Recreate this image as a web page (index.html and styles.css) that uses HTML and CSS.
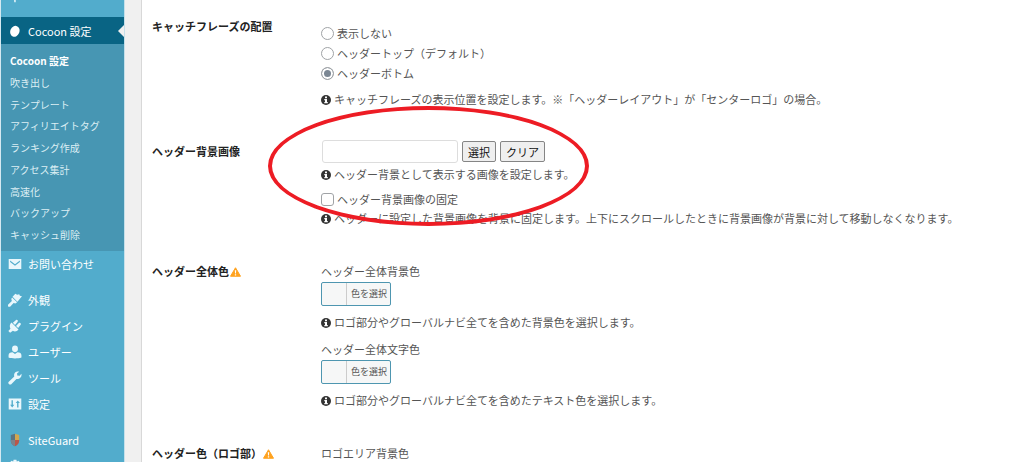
FILE: index.html
```html
<!DOCTYPE html>
<html lang="ja">

<head>
    <meta charset="UTF-8">
    <meta name="viewport" content="width=device-width, initial-scale=1.0">
    <title>Cocoon 設定</title>
    <link rel="stylesheet" href="styles.css">
</head>

<body>
    <svg class="symbols" aria-hidden="true">
        <symbol id="icon-info" viewBox="0 0 20 20">
            <circle cx="10" cy="10" r="10" fill="#333" />
            <path d="M8 3h4v3.400H8zM6.600 8H12v6h1.600v2.400H6.600V14H8v-3.600H6.600z" fill="#fff" />
        </symbol>
        <symbol id="icon-warning" viewBox="0 0 22 20">
            <path d="M11 1.500L21 18.500H1z" fill="#ffa21f" stroke="#ffa21f" stroke-width="2" stroke-linejoin="round" />
            <path d="M9.600 6.500h2.800l-.5 6.500h-1.800zM9.700 14.300h2.600v2.500H9.700z" fill="#fff" />
        </symbol>
    </svg>

    <div class="wrapper">
        <nav class="sidebar">
            <a href="#" class="menu-item menu-item-cut" aria-label="ツール">
                <svg class="menu-icon" viewBox="0 0 20 20"><path d="M8 5h3v14H9z" /></svg>
            </a>
            <a href="#" class="menu-item current">
                <svg class="menu-icon" viewBox="0 0 20 20"><ellipse cx="10" cy="10.500" rx="6.500" ry="8" transform="rotate(22 10 10)" /></svg>
                Cocoon 設定
            </a>
            <ul class="submenu">
                <li><a href="#" class="active">Cocoon 設定</a></li>
                <li><a href="#">吹き出し</a></li>
                <li><a href="#">テンプレート</a></li>
                <li><a href="#">アフィリエイトタグ</a></li>
                <li><a href="#">ランキング作成</a></li>
                <li><a href="#">アクセス集計</a></li>
                <li><a href="#">高速化</a></li>
                <li><a href="#">バックアップ</a></li>
                <li><a href="#">キャッシュ削除</a></li>
            </ul>
            <a href="#" class="menu-item">
                <svg class="menu-icon" viewBox="0 0 20 20"><path fill-rule="evenodd" d="M1 3h18v14H1zM3 5v2l7 5.500L17 7V5l-7 5.500z" /></svg>
                お問い合わせ
            </a>
            <div class="separator"></div>
            <a href="#" class="menu-item">
                <svg class="menu-icon" viewBox="0 0 20 20"><path d="M6.500 5.500L10.500 1l2.500 1.500 3-.7 1 2 3 .7-6.500 8zM5.800 6.300l7.200 7-2.500 1.700-2.500-.8L3 19.500c-2.200 1-4-.8-3-2.800L5.500 11.500l-.8-3z" /></svg>
                外観
            </a>
            <a href="#" class="menu-item">
                <svg class="menu-icon" viewBox="0 0 20 20"><path d="M5 5l10 10c-2 2.800-5.500 3.500-8 1.800L3 19.800.5 17.300l3-3.500C1.800 11 2.500 7 5 5zM7 5.500l4.500-4c1.500-1 3.300.8 2.300 2.300L10 8.500zM11.500 10l4-4.200c1.700-1.200 3.800.8 2.600 2.500L14.500 13z" /></svg>
                プラグイン
            </a>
            <a href="#" class="menu-item">
                <svg class="menu-icon" viewBox="0 0 20 20"><ellipse cx="10" cy="5.500" rx="4.200" ry="4.700" /><path d="M.8 18v-3c0-2.800 2.200-4.500 5.700-4.500l3.500 2.300 3.500-2.300c3.500 0 5.700 1.700 5.700 4.500v3c-5 1.700-13.400 1.700-18.400 0z" /></svg>
                ユーザー
            </a>
            <a href="#" class="menu-item">
                <svg class="menu-icon" viewBox="0 0 20 20"><path d="M16.700 6.800L13.200 6.600 13 3.300 16 1C13.500.2 11 .9 9.600 2.800 8.500 4.300 8.500 6.500 9 8L.8 15.600c-1.200 1.500 1 4.800 3.500 3.600L12 11.300c2 .7 4 .1 5.600-1.500 1.600-1.600 2.100-3.800 1.500-5.800z" /></svg>
                ツール
            </a>
            <a href="#" class="menu-item">
                <svg class="menu-icon" viewBox="0 0 20 20"><path fill-rule="evenodd" d="M1 2h18v16H1zM5 4.500V11H3l3 4 3-4H7V4.500zM14 5l-3 3.500h2V15h2V8.500h2z" /></svg>
                設定
            </a>
            <div class="separator"></div>
            <a href="#" class="menu-item">
                <svg class="menu-icon" viewBox="0 0 20 20">
                    <path d="M10 1L4 3v8c0 4 3 6.500 6 8z" fill="#5b7483" />
                    <path d="M10 1l6 2v7h-6z" fill="#d3a64f" />
                    <path d="M10 10h6v1c0 4-3 6.500-6 8z" fill="#b9574a" />
                    <path d="M4 10h6v9c-3-1.500-6-4-6-8z" fill="#7b828b" />
                </svg>
                SiteGuard
            </a>
            <a href="#" class="menu-item" aria-label="設定">
                <svg class="menu-icon" viewBox="0 0 20 20"><path d="M8 1h4l.6 2.500L15 2.500 17.500 5l-1.200 2.500L19 8v4l-2.700.8 1.200 2.400-2.700 2.500-2.300-1.200L12 19H8l-.6-2.500L5 17.700 2.500 15l1.200-2.300L1 12V8l2.700-.6L2.500 5 5 2.500l2.400 1z" /></svg>
            </a>
        </nav>

        <main class="content">
            <form class="settings">
                <section class="form-row form-row-radio">
                    <h2>キャッチフレーズの配置</h2>
                    <div class="form-field">
                        <label class="check"><input type="radio" name="catch">表示しない</label>
                        <label class="check"><input type="radio" name="catch">ヘッダートップ（デフォルト）</label>
                        <label class="check"><input type="radio" name="catch" checked>ヘッダーボトム</label>
                        <p class="tips tips-space"><svg class="info"><use href="#icon-info" /></svg>キャッチフレーズの表示位置を設定します。※「ヘッダーレイアウト」が「センターロゴ」の場合。</p>
                    </div>
                </section>

                <section class="form-row form-row-upload">
                    <h2>ヘッダー背景画像</h2>
                    <div class="form-field">
                        <div class="upload">
                            <input type="text" class="upload-url" aria-label="ヘッダー背景画像">
                            <button type="button" class="btn">選択</button>
                            <button type="button" class="btn">クリア</button>
                        </div>
                        <p class="tips"><svg class="info"><use href="#icon-info" /></svg>ヘッダー背景として表示する画像を設定します。</p>
                        <label class="check check-fixed"><input type="checkbox">ヘッダー背景画像の固定</label>
                        <p><svg class="info"><use href="#icon-info" /></svg>ヘッダーに設定した背景画像を背景に固定します。上下にスクロールしたときに背景画像が背景に対して移動しなくなります。</p>
                    </div>
                    <div class="marker"></div>
                </section>

                <section class="form-row">
                    <h2>ヘッダー全体色<svg class="warning"><use href="#icon-warning" /></svg></h2>
                    <div class="form-field">
                        <p>ヘッダー全体背景色</p>
                        <button type="button" class="color-picker"><span>色を選択</span></button>
                        <p class="tips tips-space"><svg class="info"><use href="#icon-info" /></svg>ロゴ部分やグローバルナビ全てを含めた背景色を選択します。</p>
                        <p class="next-label">ヘッダー全体文字色</p>
                        <button type="button" class="color-picker"><span>色を選択</span></button>
                        <p class="tips tips-space"><svg class="info"><use href="#icon-info" /></svg>ロゴ部分やグローバルナビ全てを含めたテキスト色を選択します。</p>
                    </div>
                </section>

                <section class="form-row">
                    <h2>ヘッダー色（ロゴ部）<svg class="warning"><use href="#icon-warning" /></svg></h2>
                    <div class="form-field">
                        <p>ロゴエリア背景色</p>
                    </div>
                </section>
            </form>
        </main>
    </div>
</body>

</html>
```

FILE: styles.css
```css
* {
    box-sizing: border-box;
}

body {
    margin: 0;
    background-color: #fff;
    color: #555;
    font-family: "Noto Sans CJK JP", sans-serif;
    font-size: 11px;
    line-height: 18px;
    overflow: hidden;
}

h2,
p,
ul {
    margin: 0;
    padding: 0;
}

.symbols {
    display: none;
}

.wrapper {
    display: flex;
    height: calc(100vh - 2px);
    overflow: hidden;
    background-color: #f0f0f0;
    border-left: 1px solid #d5e9f1;
}

/* sidebar */
.sidebar {
    flex: 0 0 124px;
    background-color: #52accc;
    border-right: 1px solid #c5e0ea;
}

.menu-item {
    display: flex;
    align-items: center;
    gap: 6px;
    height: 26px;
    padding-left: 7px;
    color: #fff;
    text-decoration: none;
    white-space: nowrap;
}

.menu-item-cut {
    height: 17px;
    align-items: flex-start;
}

.menu-item-cut .menu-icon {
    margin-top: -11px;
}

.menu-icon {
    flex: none;
    width: 14px;
    height: 14px;
    fill: #e9f7fc;
}

.current {
    height: 27px;
    background-color: #096484;
}

.current .menu-icon {
    fill: #fff;
}

.current::after {
    content: "";
    margin-left: auto;
    border: 6px solid transparent;
    border-left: 0;
    border-right-color: #f0f0f0;
}

.submenu {
    display: flex;
    flex-direction: column;
    justify-content: space-between;
    min-height: 207px;
    padding: 6px 0 6px 9px;
    background-color: #4796b3;
    list-style: none;
    font-size: 10px;
    line-height: 21px;
}

.submenu a {
    display: block;
    color: #dceef4;
    text-decoration: none;
}

.submenu .active {
    color: #fff;
    font-weight: bold;
}

.separator {
    height: 10px;
}

/* settings */
.content {
    flex: 1;
    min-width: 0;
    margin-left: 16px;
    padding: 17px 8px 0 10px;
    background-color: #fff;
    border-left: 1px solid #d8d8d8;
}

.form-row {
    position: relative;
    display: grid;
    grid-template-columns: 169px 1fr;
    margin-bottom: 35px;
}

.form-row-radio {
    margin-bottom: 32px;
}

.form-row-radio .form-field {
    padding-top: 6px;
}

.form-row-upload h2 {
    padding-top: 2px;
}

h2 {
    color: #222;
    font-size: 11px;
    line-height: 18px;
}

.form-field {
    white-space: nowrap;
}

.check {
    display: flex;
    align-items: center;
    gap: 3px;
    height: 20px;
}

.check input {
    appearance: none;
    width: 13px;
    height: 13px;
    margin: 0;
    background-color: #fff;
    border: 1px solid #a0a3a6;
    border-radius: 3px;
}

.check input[type="radio"] {
    border-radius: 50%;
}

.check input[type="radio"]:checked {
    background-color: #7b8794;
    box-shadow: inset 0 0 0 2px #fff;
}

.check-fixed {
    margin-top: 6px;
}

.tips {
    margin-top: 2px;
}

.tips-space {
    margin-top: 7px;
}

.info {
    width: 10px;
    height: 10px;
    margin-right: 3px;
    vertical-align: -1px;
}

.warning {
    width: 11px;
    height: 10px;
    margin-left: 1px;
    vertical-align: -1px;
}

.upload {
    display: flex;
    align-items: center;
    gap: 4px;
    padding-left: 1px;
}

.upload-url {
    width: 136px;
    height: 23px;
    border: 1px solid #ddd;
    border-radius: 3px;
}

.btn {
    height: 21px;
    padding: 0 5px;
    background-color: #efefef;
    border: 1px solid #858585;
    border-radius: 2px;
    color: #111;
    font-family: inherit;
    font-size: 11px;
    line-height: 18px;
}

/* red circle over the upload fields */
.marker {
    position: absolute;
    top: -34px;
    left: 116px;
    width: 321px;
    height: 120px;
    border: 4px solid #ed1c24;
    border-radius: 50%;
    pointer-events: none;
}

.color-picker {
    display: block;
    height: 24px;
    margin-top: 2px;
    padding: 0 0 0 24px;
    background-color: #f6f7f7;
    border: 1px solid #4e96b0;
    border-radius: 2px;
    color: #555;
    font-family: inherit;
    font-size: 9px;
}

.color-picker span {
    display: block;
    padding: 0 3px 0 4px;
    border-left: 1px solid #ccc;
    line-height: 22px;
}

.next-label {
    margin-top: 9px;
}
```
